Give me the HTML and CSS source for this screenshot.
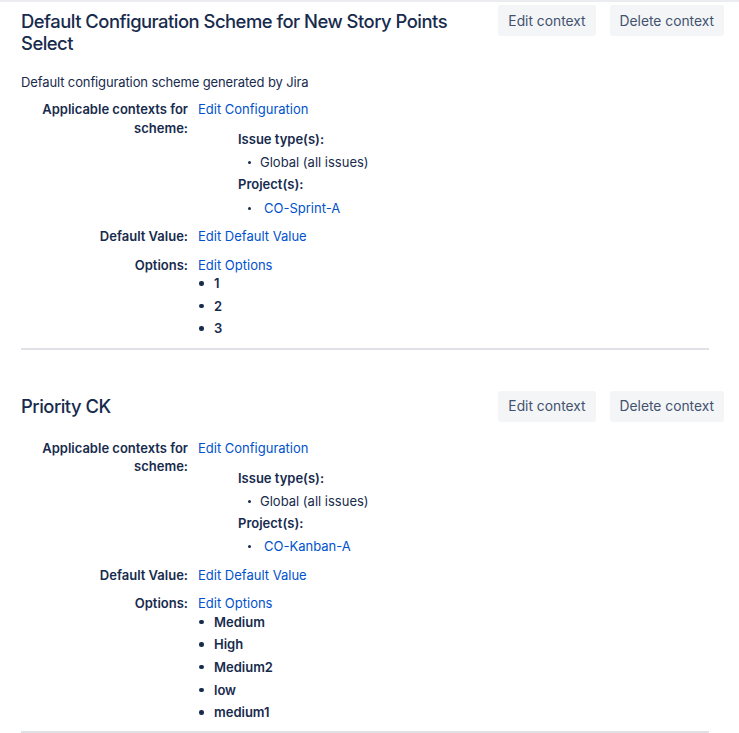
FILE: index.html
```html
<!DOCTYPE html>
<html lang="en">
<head>
    <meta charset="UTF-8">
    <meta name="viewport" content="width=device-width, initial-scale=1.0">
    <title>Custom field contexts</title>
    <link rel="stylesheet" href="styles.css">
</head>
<body>
    <div class="page">

        <div class="scheme">
            <div class="scheme-head">
                <h3 class="scheme-title">Default Configuration Scheme for New Story Points Select</h3>
                <div class="scheme-actions">
                    <button type="button">Edit context</button>
                    <button type="button">Delete context</button>
                </div>
            </div>
            <p class="scheme-desc">Default configuration scheme generated by Jira</p>
            <dl class="fields">
                <dt>Applicable contexts for scheme:</dt>
                <dd>
                    <a href="#">Edit Configuration</a>
                    <div class="contexts">
                        <strong>Issue type(s):</strong>
                        <ul class="dots">
                            <li>Global (all issues)</li>
                        </ul>
                        <strong>Project(s):</strong>
                        <ul class="dots">
                            <li><a href="#" class="project">CO-Sprint-A</a></li>
                        </ul>
                    </div>
                </dd>

                <dt>Default Value:</dt>
                <dd><a href="#">Edit Default Value</a></dd>

                <dt>Options:</dt>
                <dd>
                    <a href="#">Edit Options</a>
                    <ul class="options">
                        <li>1</li>
                        <li>2</li>
                        <li>3</li>
                    </ul>
                </dd>
            </dl>
        </div>

        <div class="scheme">
            <div class="scheme-head">
                <h3 class="scheme-title">Priority CK</h3>
                <div class="scheme-actions">
                    <button type="button">Edit context</button>
                    <button type="button">Delete context</button>
                </div>
            </div>
            <dl class="fields">
                <dt>Applicable contexts for scheme:</dt>
                <dd>
                    <a href="#">Edit Configuration</a>
                    <div class="contexts">
                        <strong>Issue type(s):</strong>
                        <ul class="dots">
                            <li>Global (all issues)</li>
                        </ul>
                        <strong>Project(s):</strong>
                        <ul class="dots">
                            <li><a href="#" class="project">CO-Kanban-A</a></li>
                        </ul>
                    </div>
                </dd>

                <dt>Default Value:</dt>
                <dd><a href="#">Edit Default Value</a></dd>

                <dt>Options:</dt>
                <dd>
                    <a href="#">Edit Options</a>
                    <ul class="options">
                        <li>Medium</li>
                        <li>High</li>
                        <li>Medium2</li>
                        <li>low</li>
                        <li>medium1</li>
                    </ul>
                </dd>
            </dl>
        </div>

    </div>
</body>
</html>
```

FILE: styles.css
```css
body {
    font-family: Inter, "Noto Sans", sans-serif;
    font-size: 13px;
    line-height: 18.6px;
    margin: 0;
    padding: 0;
    background: #fff;
    color: #172b4d;
    border-top: 2px solid #ebecf0;
}
.page {
    padding: 3px 15px 0 21px;
}
a {
    color: #0052cc;
    text-decoration: none;
}
.scheme + .scheme {
    margin-top: 41px;
}
.scheme-head {
    display: flex;
    align-items: flex-start;
    justify-content: space-between;
    gap: 20px;
    margin-bottom: 17px;
}
.scheme-title {
    margin: 0;
    padding-top: 4.5px;
    font-size: 18.4px;
    line-height: 22px;
    font-weight: 500;
    letter-spacing: -0.5px;
    max-width: 460px;
}
.scheme-actions {
    display: flex;
    gap: 14px;
    flex-shrink: 0;
}
.scheme-actions button {
    font-family: inherit;
    font-size: 13.8px;
    height: 31px;
    padding: 0 10px;
    border: none;
    border-radius: 3px;
    background: #f4f5f7;
    color: #42526e;
    cursor: pointer;
}
.scheme-desc {
    margin: 19px 0 9px;
    letter-spacing: -0.12px;
}
.fields {
    display: grid;
    grid-template-columns: 167px 1fr;
    column-gap: 10px;
    row-gap: 9.9px;
    margin: 0 15px 0 0;
    padding-bottom: 9.7px;
    border-bottom: 2px solid #dfe1e6;
}
.fields dt {
    font-weight: 600;
    text-align: right;
    padding-left: 20px;
}
.fields dd {
    margin: 0;
}
.contexts {
    margin: 11.4px 0 0 40px;
}
.contexts strong {
    display: block;
    font-weight: 600;
}
ul {
    list-style: none;
    margin: 0;
    padding: 0;
}
.dots {
    margin: 4.6px 0 3.6px;
    padding-left: 22px;
}
.dots:last-child {
    margin-bottom: 0;
}
.dots li {
    position: relative;
}
.dots li::before {
    content: "";
    position: absolute;
    left: -12px;
    top: 8px;
    width: 3px;
    height: 3px;
    border-radius: 50%;
    background: #172b4d;
}
.project {
    margin-left: 4px;
}
.options {
    padding-left: 16px;
}
.options li {
    position: relative;
    font-weight: 600;
}
.options li + li {
    margin-top: 4px;
}
.options li::before {
    content: "";
    position: absolute;
    left: -15px;
    top: 7px;
    width: 4.5px;
    height: 4.5px;
    border-radius: 50%;
    background: #172b4d;
}
```
